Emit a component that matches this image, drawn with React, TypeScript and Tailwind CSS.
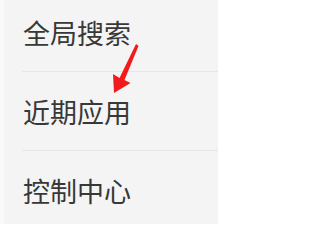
import React from "react";

const items = ["全局搜索", "近期应用", "控制中心"];

export default function App() {
  return (
    <div className="relative w-[218px] h-[224px] overflow-hidden bg-[#f4f4f4] border-l-[4px] border-[#fafafa]">
      <ul className="-mt-[7px] pl-[18px]">
        {items.map((item, idx) => (
          <li
            key={idx}
            className={`h-[79px] flex items-center pl-[1px] text-[27px] leading-none text-[#383838] ${
              idx < items.length - 1 ? "border-b border-[#e6e6e6]" : ""
            }`}
            style={{ fontFamily: '"Noto Sans CJK SC", "Noto Sans", sans-serif' }}
          >
            {item}
          </li>
        ))}
      </ul>

      {/* red pointer arrow */}
      <svg
        className="absolute -left-[4px] top-0"
        width="218"
        height="224"
        viewBox="0 0 218 224"
      >
        <polygon
          points="136,44 138.5,46 124.5,80 130.5,83 114,93 113,74 119.5,78"
          fill="#f21b1b"
        />
      </svg>
    </div>
  );
}
